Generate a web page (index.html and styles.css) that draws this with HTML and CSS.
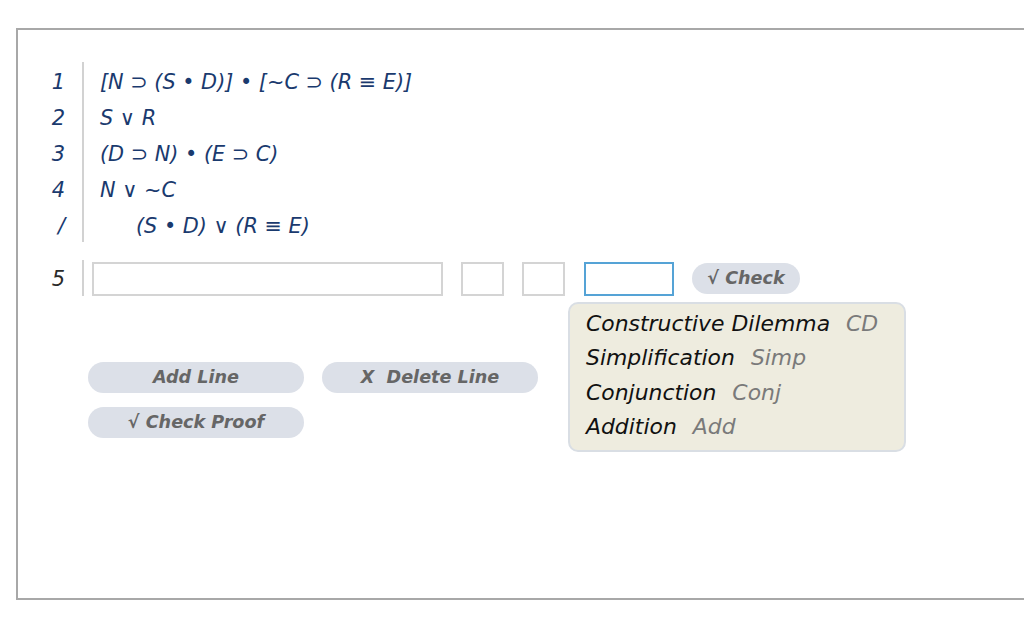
FILE: index.html
```html
<!DOCTYPE html>
<html>
<head>
<meta charset="utf-8">
<link rel="stylesheet" href="styles.css">
</head>
<body>
<div class="frame">
  <div class="premises">
    <div class="num">1</div><div class="formula">[N ⊃ (S • D)] • [~C ⊃ (R ≡ E)]</div>
    <div class="num">2</div><div class="formula">S ∨ R</div>
    <div class="num">3</div><div class="formula">(D ⊃ N) • (E ⊃ C)</div>
    <div class="num">4</div><div class="formula">N ∨ ~C</div>
    <div class="num">/</div><div class="formula concl">(S • D) ∨ (R ≡ E)</div>
  </div>
  <div class="entry">
    <div class="num dark">5</div>
    <div class="fields">
      <div class="box main"></div>
      <div class="box small"></div>
      <div class="box small"></div>
      <div class="rulewrap">
        <div class="box rule"></div>
        <div class="dropdown">
          <div class="item">Constructive Dilemma<span class="abbr">CD</span></div>
          <div class="item">Simplification<span class="abbr">Simp</span></div>
          <div class="item">Conjunction<span class="abbr">Conj</span></div>
          <div class="item">Addition<span class="abbr">Add</span></div>
        </div>
      </div>
      <div class="btn check">√ Check</div>
    </div>
  </div>
  <div class="actions">
    <div class="btn wide">Add Line</div>
    <div class="btn wide">X&nbsp; Delete Line</div>
    <div class="btn wide">√ Check Proof</div>
  </div>
</div>
</body>
</html>
```

FILE: styles.css
```css
html, body {
  margin: 0;
  padding: 0;
  overflow: hidden;
  background: #fff;
}
body {
  font-family: "DejaVu Sans", Verdana, sans-serif;
}
.frame {
  margin: 28px 0 0 16px;
  width: 1100px;
  height: 568px;
  border: 2px solid #a8a8a8;
  box-sizing: content-box;
}
.premises {
  display: grid;
  grid-template-columns: 64px 1fr;
  margin-top: 32px;
}
.num {
  font-style: italic;
  font-size: 21px;
  color: #1a3a6e;
  text-align: right;
  line-height: 36px;
  padding-right: 17px;
  padding-top: 2px;
  height: 36px;
  box-sizing: border-box;
}
.entry .num.dark {
  color: #2a2a2a;
  width: 64px;
  flex: none;
  padding-top: 1px;
}
.formula {
  font-style: italic;
  font-size: 20.8px;
  line-height: 36px;
  color: #1a3a6e;
  border-left: 2px solid #d2d2d2;
  padding-left: 16px;
  white-space: pre;
  padding-top: 2px;
  height: 36px;
  box-sizing: border-box;
}
.formula.concl {
  padding-left: 52px;
}
.entry {
  display: flex;
  margin-top: 18px;
  height: 36px;
}
.fields {
  display: flex;
  align-items: flex-start;
  gap: 18px;
  border-left: 2px solid #d2d2d2;
  padding-left: 8px;
  height: 36px;
  padding-top: 2px;
  box-sizing: border-box;
}
.box {
  height: 34px;
  box-sizing: border-box;
  border: 2px solid #d4d4d4;
  background: #fff;
}
.box.main { width: 351px; }
.box.small { width: 43px; }
.box.rule {
  width: 90px;
  border: 2px solid #55a3d6;
}
.rulewrap {
  position: relative;
  margin-left: 1px;
}
.dropdown {
  position: absolute;
  top: 40px;
  left: -16px;
  width: 338px;
  height: 150px;
  box-sizing: border-box;
  background: #eeecdf;
  border: 2px solid #d9dee4;
  border-radius: 10px;
  padding: 3px 0 0 16px;
}
.item {
  font-style: italic;
  font-size: 21.9px;
  line-height: 34.3px;
  color: #111;
  white-space: nowrap;
}
.abbr {
  color: #7a7a7a;
  margin-left: 16px;
}
.btn {
  background: #dce0e8;
  border-radius: 16px;
  color: #666;
  font-weight: bold;
  font-style: italic;
  font-size: 17.6px;
  text-align: center;
  height: 31px;
  line-height: 31px;
}
.btn.check {
  width: 108px;
  margin-top: 1px;
}
.actions {
  display: grid;
  grid-template-columns: 216px 216px;
  column-gap: 18px;
  row-gap: 14px;
  margin: 66px 0 0 70px;
}
```
